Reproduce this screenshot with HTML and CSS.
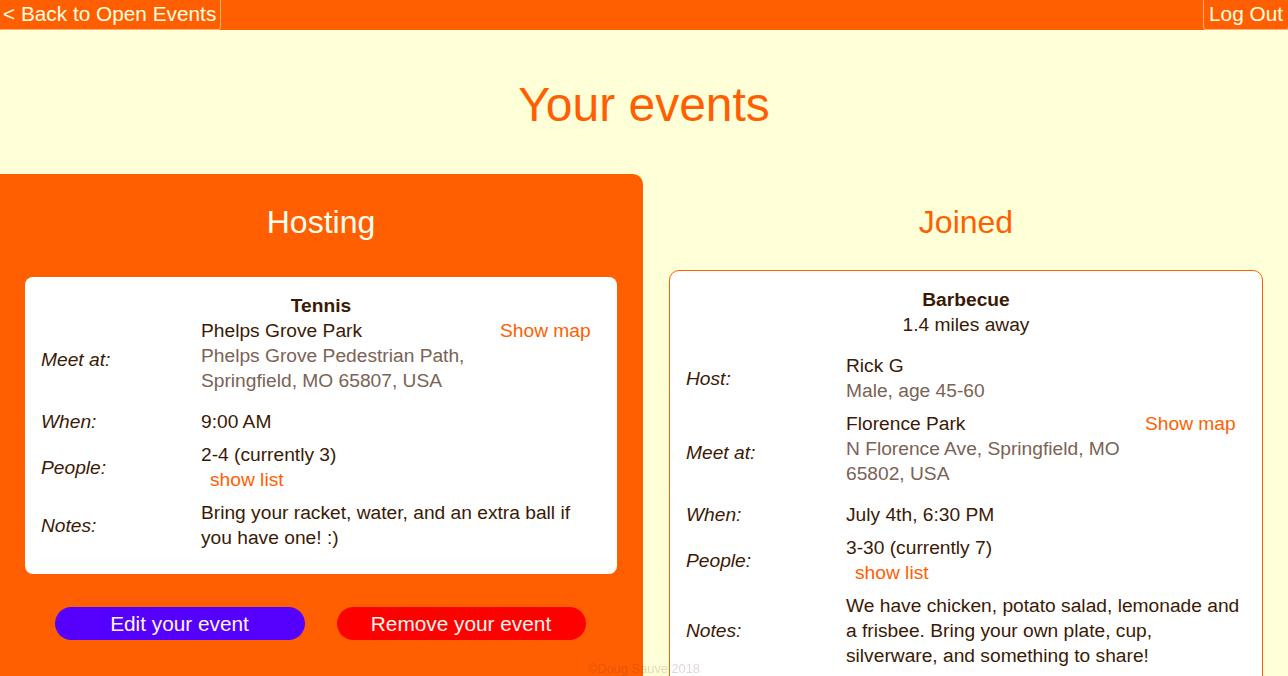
FILE: index.html
```html
<!DOCTYPE html>
<html>
<head>
<meta charset="utf-8">
<link rel="stylesheet" href="styles.css">
</head>
<body>
<header class="topbar">
  <button class="nav-btn back">&lt; Back to Open Events</button>
  <button class="nav-btn logout">Log Out</button>
</header>
<h1 class="page-title">Your events</h1>
<main class="columns">
  <section class="col hosting">
    <h2 class="col-title">Hosting</h2>
    <div class="card host-card">
      <div class="card-head"><div class="ev-name">Tennis</div></div>
      <div class="rows">
        <div class="label">Meet at:</div>
        <div class="value addr-cell">
          <div>Phelps Grove Park</div>
          <div class="addr">Phelps Grove Pedestrian Path, Springfield, MO 65807, USA</div>
        </div>
        <div class="map-link">Show map</div>

        <div class="label">When:</div>
        <div class="value span2">9:00 AM</div>

        <div class="label">People:</div>
        <div class="value span2">
          <div>2-4 (currently 3)</div>
          <div class="show-list">show list</div>
        </div>

        <div class="label">Notes:</div>
        <div class="value span2">Bring your racket, water, and an extra ball if you have one! :)</div>
      </div>
    </div>
    <div class="actions">
      <button class="pill edit">Edit your event</button>
      <button class="pill remove">Remove your event</button>
    </div>
  </section>
  <section class="col joined">
    <h2 class="col-title">Joined</h2>
    <div class="card join-card">
      <div class="card-head">
        <div class="ev-name">Barbecue</div>
        <div class="distance">1.4 miles away</div>
      </div>
      <div class="rows">
        <div class="label">Host:</div>
        <div class="value span2">
          <div>Rick G</div>
          <div class="addr">Male, age 45-60</div>
        </div>

        <div class="label">Meet at:</div>
        <div class="value addr-cell">
          <div>Florence Park</div>
          <div class="addr">N Florence Ave, Springfield, MO 65802, USA</div>
        </div>
        <div class="map-link">Show map</div>

        <div class="label">When:</div>
        <div class="value span2">July 4th, 6:30 PM</div>

        <div class="label">People:</div>
        <div class="value span2">
          <div>3-30 (currently 7)</div>
          <div class="show-list">show list</div>
        </div>

        <div class="label">Notes:</div>
        <div class="value span2">We have chicken, potato salad, lemonade and a frisbee. Bring your own plate, cup, silverware, and something to share!</div>
      </div>
    </div>
  </section>
</main>
<footer class="credit">©Doug Sauve 2018</footer>
</body>
</html>
```

FILE: styles.css
```css
* { box-sizing: border-box; }

html, body {
  margin: 0;
  padding: 0;
}

body {
  background: #ffffd8;
  font-family: "Liberation Sans", Arial, sans-serif;
  color: #3b1a05;
}

.topbar {
  height: 30px;
  background: #ff5f00;
  display: flex;
  justify-content: space-between;
  align-items: stretch;
  overflow: hidden;
}

.nav-btn {
  font-family: "Liberation Sans", Arial, sans-serif;
  font-size: 20.8px;
  line-height: 27px;
  color: #ffffe0;
  background: #ff5f00;
  border: 1px solid rgba(255, 240, 200, 0.55);
  border-top: none;
  border-radius: 0 0 3px 3px;
  padding: 0 4px 2px;
  margin: 0;
  height: 30px;
}

.back { margin-left: -2px; }
.logout { margin-right: -1px; padding: 0 5px 2px 5px; }

.page-title {
  margin: 0;
  padding: 48px 0 42px;
  text-align: center;
  font-size: 48px;
  line-height: 54px;
  font-weight: normal;
  color: #ff5f00;
}

.columns {
  display: grid;
  grid-template-columns: 643px 1fr;
}

.col {
  padding: 30px 25px 0 25px;
}

.hosting {
  background: #ff5f00;
  border-top-right-radius: 10px;
  padding-right: 26px;
  min-height: 520px;
}

.joined {
  padding-left: 26px;
}

.col-title {
  margin: 0;
  text-align: center;
  font-size: 32px;
  line-height: 37px;
  font-weight: normal;
}

.hosting .col-title { color: #fffff0; }
.joined .col-title { color: #ff5f00; }

.card {
  background: #ffffff;
  border-radius: 8px;
  padding: 16px 16px 24px 16px;
  font-size: 19.2px;
  line-height: 25px;
}

.host-card { margin-top: 36px; }

.join-card {
  margin-top: 29px;
  border: 1px solid #ff5f00;
  border-radius: 10px;
}

.card-head {
  text-align: center;
}

.ev-name {
  font-weight: bold;
}

.distance {
  margin-bottom: 16px;
}

.rows {
  display: grid;
  grid-template-columns: 150px 1fr 101px;
  column-gap: 10px;
  row-gap: 8px;
}

.label {
  font-style: italic;
  align-self: center;
}

.value { align-self: start; }

.span2 { grid-column: 2 / 4; }

.addr-cell { padding-bottom: 8px; }

.addr { color: #7a6355; }

.map-link {
  color: #ff5f00;
  align-self: start;
  text-align: right;
  padding-right: 11px;
  white-space: nowrap;
}

.show-list {
  color: #ff5f00;
  padding-left: 9px;
}

.actions {
  display: flex;
  justify-content: center;
  gap: 32px;
  margin-top: 33px;
  margin-left: -2px;
}

.pill {
  font-family: "Liberation Sans", Arial, sans-serif;
  font-size: 20.8px;
  line-height: 33px;
  height: 33px;
  width: 250px;
  padding: 0;
  border: none;
  border-radius: 17px;
  color: #fff6f0;
}

.edit { background: #5500ff; }
.remove { background: #ff0000; width: 249px; }

.credit {
  position: fixed;
  left: 0;
  right: 0;
  bottom: 0;
  text-align: center;
  font-size: 12.8px;
  line-height: 15px;
  color: rgba(110, 50, 50, 0.2);
}
```
